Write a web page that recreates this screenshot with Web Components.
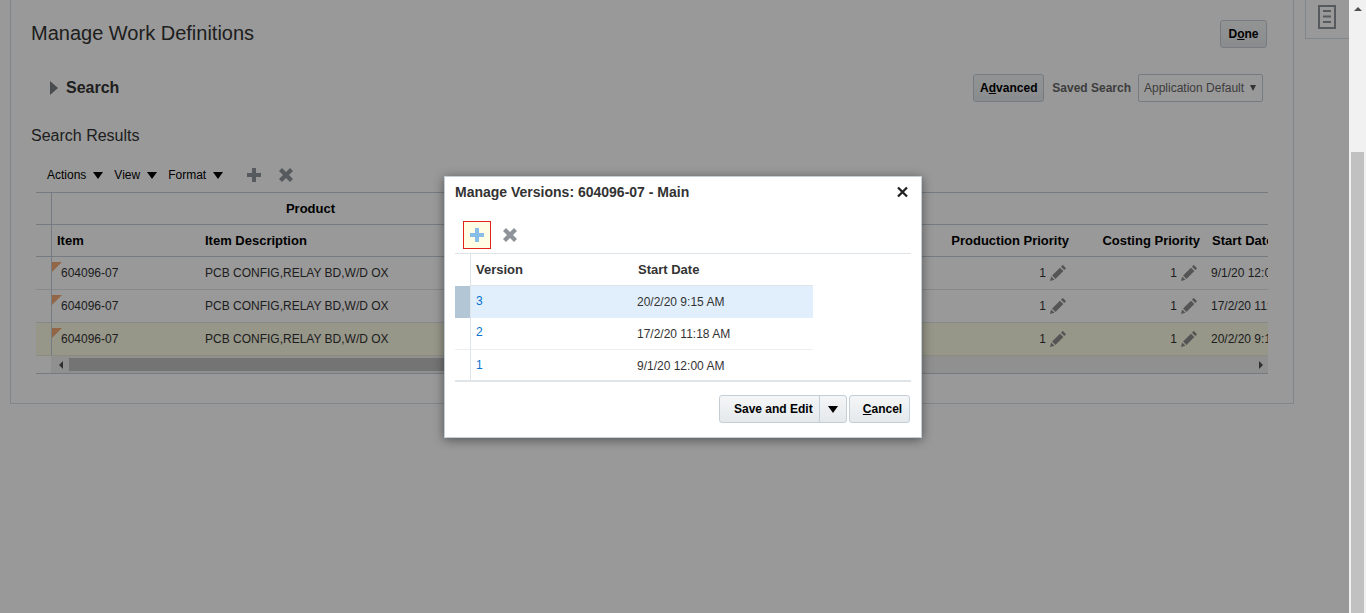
<!DOCTYPE html>
<html lang="en">
<head>
<meta charset="utf-8">
<title>Manage Work Definitions</title>
<style>
  html, body { margin: 0; height: 100%; overflow: hidden; }
  body { font-family: "Liberation Sans", Arial, sans-serif; color: #333; background: #fff; }
</style>
</head>
<body>
<wd-screen>
  <wd-page></wd-page>
  <versions-dialog slot="dialog"></versions-dialog>
</wd-screen>

<script>
const ICONS = {
  plus: `<svg width="14" height="14" viewBox="0 0 14 14"><path d="M5 0h4v5h5v4H9v5H5V9H0V5h5z" fill="currentColor"/></svg>`,
  cross: `<svg width="14" height="14" viewBox="0 0 14 14"><path d="M3 0l4 4 4-4 3 3-4 4 4 4-3 3-4-4-4 4-3-3 4-4-4-4z" fill="currentColor"/></svg>`,
  close: `<svg width="11" height="12" viewBox="0 0 11 12"><path d="M1 1.5l9 9M10 1.5l-9 9" stroke="currentColor" stroke-width="2.3" fill="none"/></svg>`,
  pencil: `<svg width="16" height="16" viewBox="0 0 17 17"><path d="M0 17l1.2-4.8 3.6 3.6zM2.2 11.2L10.6 2.8l3.6 3.6-8.4 8.4zM11.6 1.8L13 .4c.4-.4.8-.4 1.2 0l2.4 2.4c.4.4.4.8 0 1.2l-1.4 1.4z" fill="currentColor"/></svg>`,
  doc: `<svg width="18" height="24" viewBox="0 0 18 24"><path d="M1 1h16v22H1z" fill="none" stroke="currentColor" stroke-width="2"/><path d="M5 6h8M5 11.5h8M5 17h8" stroke="currentColor" stroke-width="2"/></svg>`,
};

class WdScreen extends HTMLElement {
  constructor() {
    super();
    this.attachShadow({ mode: "open" });
    this.shadowRoot.innerHTML = `
      <style>
        :host { display: flex; height: 613px; overflow: hidden; }
        .viewport { position: relative; width: 1349px; overflow: hidden; }
        .scrim { position: absolute; inset: 0; background: rgba(0, 0, 0, .4); }
        .bar { width: 17px; background: #f1f1f1; display: flex; flex-direction: column; align-items: center; }
        .up { width: 0; height: 0; margin-top: 7px; border: 4px solid transparent; border-top: 0; border-bottom: 4px solid #505050; }
        .thumb { width: 13px; margin-top: 141px; flex: 1; background: #c1c1c1; }
      </style>
      <div class="viewport">
        <slot></slot>
        <div class="scrim"></div>
        <slot name="dialog"></slot>
      </div>
      <div class="bar"><div class="up"></div><div class="thumb"></div></div>`;
  }
}

class WdButton extends HTMLElement {
  constructor() {
    super();
    this.attachShadow({ mode: "open" });
    this.shadowRoot.innerHTML = `
      <style>
        :host {
          display: inline-flex; align-items: center; justify-content: center;
          box-sizing: border-box; height: 28px; width: var(--w, auto); padding-left: var(--shift, 0);
          border: 1px solid #c4ced7; border-radius: 3px;
          background: linear-gradient(#f4f6f7, #e5e9ec);
          font: bold 12px "Liberation Sans", Arial, sans-serif; color: #000;
        }
      </style>
      <slot></slot>`;
  }
}

class WdMenu extends HTMLElement {
  constructor() {
    super();
    this.attachShadow({ mode: "open" });
    this.shadowRoot.innerHTML = `
      <style>
        :host { display: inline-flex; align-items: center; gap: 7px; font-size: 12px; color: #000; }
        i { width: 0; height: 0; border: 5.5px solid transparent; border-top: 7px solid #000; border-bottom: 0; }
      </style>
      <slot></slot><i></i>`;
  }
}

class WdTable extends HTMLElement {
  constructor() {
    super();
    this.attachShadow({ mode: "open" });
    const row = (date, current) => `
      <div class="c gut ${current ? "cur" : ""}"></div>
      <div class="c item ${current ? "cur" : ""}"><i class="mark"></i>604096-07</div>
      <div class="c desc ${current ? "cur" : ""}">PCB CONFIG,RELAY BD,W/D OX</div>
      <div class="c ${current ? "cur" : ""}"></div>
      <div class="c num ${current ? "cur" : ""}">1 <span class="pen">${ICONS.pencil}</span></div>
      <div class="c num ${current ? "cur" : ""}">1 <span class="pen">${ICONS.pencil}</span></div>
      <div class="c date ${current ? "cur" : ""}">${date}</div>`;
    this.shadowRoot.innerHTML = `
      <style>
        :host {
          display: grid; box-sizing: border-box;
          grid-template-columns: 15px 148px 370px 351px 154px 131px 63px;
          grid-template-rows: 32px 32px 33px 33px 33px 18px;
          border-top: 1px solid #c4ced7;
          font-size: 12px; color: #333; overflow: hidden;
        }
        .c { box-sizing: border-box; display: flex; align-items: center; white-space: nowrap; overflow: hidden; border-bottom: 1px solid #dfe4e9; }
        .h { border-bottom-color: #c4ced7; font-weight: bold; font-size: 13px; color: #000; }
        .gut { border-bottom-color: #dfe4e9; }
        .item, .line { border-left: 1px solid #c4ced7; }
        .item { position: relative; padding-left: 9px; }
        .h.item { padding-left: 5px; }
        .desc { padding-left: 6px; }
        .group { grid-column: span 2; justify-content: center; border-left: 1px solid #c4ced7; }
        .fill { grid-column: span 4; }
        .num { justify-content: flex-end; padding-right: 8px; gap: 3px; }
        .h.num { padding-right: 5px; }
        .pen { color: #8e8e8e; display: inline-flex; margin-left: 1px; }
        .date { padding-left: 6px; }
        .h.date { padding-left: 7px; }
        .cur { background: #fafae4; border-bottom-color: #e8e8d4; }
        .mark { position: absolute; left: 0; top: 5px; width: 0; height: 0; border-top: 10px solid #f5ab78; border-right: 10px solid transparent; }
        .sb { grid-column: 1 / -1; display: flex; align-items: center; background: linear-gradient(#fff 0 0) 0 0 / 15px 100% no-repeat, #f1f1f1; border-bottom: 1px solid #c4ced7; }
        .sb b { width: 0; height: 0; border: 4px solid transparent; }
        .sb .l { border-left: 0; border-right: 4px solid #505050; margin-left: 23px; }
        .sb .thumb { height: 13px; width: 500px; margin-left: 6px; background: #c1c1c1; }
        .sb .r { border-right: 0; border-left: 4px solid #505050; margin-left: auto; margin-right: 5px; }
      </style>
      <div class="c h"></div><div class="c h group">Product</div><div class="c h fill"></div>
      <div class="c h"></div>
      <div class="c h item">Item</div>
      <div class="c h desc">Item Description</div>
      <div class="c h"></div>
      <div class="c h num">Production Priority</div>
      <div class="c h num">Costing Priority</div>
      <div class="c h date">Start Date</div>
      ${row("9/1/20 12:00 AM")}
      ${row("17/2/20 11:18 AM")}
      ${row("20/2/20 9:15 AM", true)}
      <div class="sb"><b class="l"></b><div class="thumb"></div><b class="r"></b></div>`;
  }
}

class WdPage extends HTMLElement {
  constructor() {
    super();
    this.attachShadow({ mode: "open" });
    this.shadowRoot.innerHTML = `
      <style>
        :host { display: flex; align-items: flex-start; padding-left: 10px; }
        .card {
          box-sizing: border-box; width: 1284px; height: 404px;
          padding: 20px 26px 0 20px;
          border: 1px solid #d6dfe6; border-top: 0; background: #fff;
        }
        .top, .search { display: flex; align-items: center; justify-content: space-between; height: 28px; }
        h1 { margin: -2px 0 0; font-size: 20px; font-weight: normal; color: #333; }
        .search { margin-top: 26px; padding-left: 19px; padding-right: 4px; }
        .left, .right { display: flex; align-items: center; }
        .tri { width: 0; height: 0; border: 7px solid transparent; border-right: 0; border-left: 8px solid #7b7f83; }
        .left b { font-size: 16px; margin-left: 8px; color: #333; }
        .saved { font-size: 12px; font-weight: bold; color: #666; margin: 0 7px 0 8px; }
        .select {
          box-sizing: border-box; height: 28px; width: 125px; padding: 0 5px;
          display: flex; align-items: center; justify-content: space-between; white-space: nowrap;
          border: 1px solid #c4ced7; border-radius: 2px; font-size: 12px; color: #666;
        }
        .select i { width: 0; height: 0; border: 3.5px solid transparent; border-top: 6px solid #555; border-bottom: 0; margin-right: 1px; }
        h2 { margin: 24px 0 0; font-size: 16px; line-height: 20px; font-weight: normal; color: #333; }
        .tools { display: flex; align-items: center; height: 20px; margin: 19px 0 7px; padding-left: 16px; }
        .tools wd-menu { margin-right: 11px; }
        .tools span { display: inline-flex; color: #8f979e; }
        wd-table { margin: 0 -1px 0 5px; }
        .tab {
          box-sizing: border-box; width: 44px; height: 39px; margin-left: 11px;
          display: flex; justify-content: center; padding: 5px 1px 0 0;
          border: 1px solid #d6dfe6; border-width: 0 0 1px 1px; color: #8f979e;
        }
      </style>
      <div class="card">
        <div class="top">
          <h1>Manage Work Definitions</h1>
          <wd-button style="--w:47px">D<u>o</u>ne</wd-button>
        </div>
        <div class="search">
          <div class="left"><i class="tri"></i><b>Search</b></div>
          <div class="right">
            <wd-button style="--w:71px">A<u>d</u>vanced</wd-button>
            <span class="saved">Saved Search</span>
            <div class="select">Application Default <i></i></div>
          </div>
        </div>
        <h2>Search Results</h2>
        <div class="tools">
          <wd-menu>Actions</wd-menu><wd-menu>View</wd-menu><wd-menu>Format</wd-menu>
          <span style="margin-left:13px">${ICONS.plus}</span>
          <span style="margin-left:18px">${ICONS.cross}</span>
        </div>
        <wd-table></wd-table>
      </div>
      <div class="tab">${ICONS.doc}</div>`;
  }
}

class VersionsDialog extends HTMLElement {
  constructor() {
    super();
    this.attachShadow({ mode: "open" });
    this.shadowRoot.innerHTML = `
      <style>
        :host {
          position: absolute; left: 444px; top: 176px; width: 478px; height: 262px; box-sizing: border-box;
          padding: 0 10px; background: #fff; border: 1px solid #c4ced7;
          box-shadow: 0 2px 10px rgba(0, 0, 0, .45);
          font-size: 12px; color: #333;
        }
        header { display: flex; justify-content: space-between; align-items: center; height: 29px; }
        header b { font-size: 14px; color: #333; }
        header span { display: inline-flex; color: #222; margin-right: 3px; margin-top: 1px; }
        .tools { display: flex; align-items: center; height: 28px; margin-top: 15px; padding-left: 8px; }
        .add { box-sizing: border-box; width: 28px; height: 28px; display: flex; align-items: center; justify-content: center; border: 1px solid #e2231a; background: #fffde3; color: #88bde8; }
        .del { margin-left: 12px; display: inline-flex; color: #8e9499; }
        .grid {
          display: grid; margin-top: 4px; height: 129px; box-sizing: border-box;
          grid-template-columns: 15px 162px 181px 1fr;
          grid-template-rows: 32px 32px 32px 32px;
          border-top: 1px solid #dfe4e9; border-bottom: 2px solid #dfe4e9;
        }
        .g { display: flex; align-items: center; box-sizing: border-box; }
        .v { border-left: 1px solid #dfe4e9; padding-left: 5px; }
        .d { padding-left: 5px; }
        .th { font-weight: bold; font-size: 13px; color: #333; }
        .th.d { padding-left: 6px; }
        .th { border-bottom: 1px solid #dfe4e9; }
        a { color: #0572ce; text-decoration: none; margin-top: -3px; }
        .sel { background: #e1effc; }
        .gsel { background: #b3c6d6; }
        .rule { border-bottom: 1px solid #eceff2; }
        footer { display: flex; justify-content: flex-end; gap: 2px; margin-top: 13px; padding-right: 1px; }
        .label { padding-left: 14px; flex: 1; }
        .split { display: inline-flex; align-items: center; justify-content: center; box-sizing: border-box; width: 27px; height: 26px; border-left: 1px solid #c4ced7; }
        .caret { width: 0; height: 0; border: 5.5px solid transparent; border-top: 7px solid #000; border-bottom: 0; }
      </style>
      <header><b>Manage Versions: 604096-07 - Main</b><span>${ICONS.close}</span></header>
      <div class="tools">
        <div class="add">${ICONS.plus}</div>
        <span class="del">${ICONS.cross}</span>
      </div>
      <div class="grid">
        <div class="g"></div><div class="g th v">Version</div><div class="g th d">Start Date</div><div class="g"></div>
        <div class="g gsel"></div><div class="g v sel"><a>3</a></div><div class="g d sel">20/2/20 9:15 AM</div><div class="g"></div>
        <div class="g rule"></div><div class="g v rule"><a>2</a></div><div class="g d rule">17/2/20 11:18 AM</div><div class="g"></div>
        <div class="g"></div><div class="g v"><a>1</a></div><div class="g d">9/1/20 12:00 AM</div><div class="g"></div>
      </div>
      <footer>
        <wd-button style="--w:128px"><span class="label">Save and Edit</span><span class="split"><i class="caret"></i></span></wd-button>
        <wd-button style="--w:61px;--shift:6px"><u>C</u>ancel</wd-button>
      </footer>`;
  }
}

customElements.define("wd-screen", WdScreen);
customElements.define("wd-button", WdButton);
customElements.define("wd-menu", WdMenu);
customElements.define("wd-table", WdTable);
customElements.define("wd-page", WdPage);
customElements.define("versions-dialog", VersionsDialog);
</script>
</body>
</html>
